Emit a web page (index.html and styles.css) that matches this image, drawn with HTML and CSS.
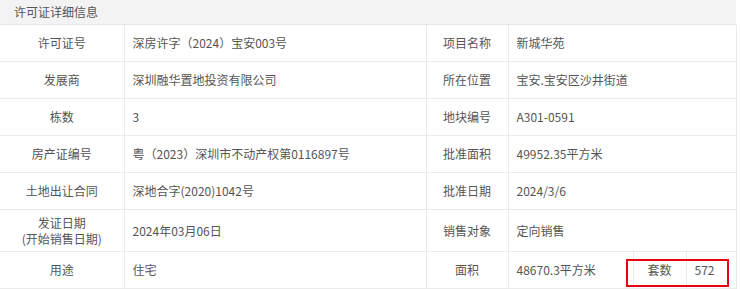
FILE: index.html
```html
<!DOCTYPE html>
<html lang="zh">
<head>
<meta charset="utf-8">
<link rel="stylesheet" href="styles.css">
</head>
<body>
<div class="panel">
  <div class="panel-title">许可证详细信息</div>
  <table class="info">
    <colgroup>
      <col class="c1"><col class="c2"><col class="c3"><col class="c4"><col class="c5"><col class="c6">
    </colgroup>
    <tr><td class="lbl">许可证号</td><td class="val">深房许字（2024）宝安003号</td><td class="lbl">项目名称</td><td class="val" colspan="3">新城华苑</td></tr>
    <tr><td class="lbl">发展商</td><td class="val">深圳融华置地投资有限公司</td><td class="lbl">所在位置</td><td class="val" colspan="3">宝安.宝安区沙井街道</td></tr>
    <tr><td class="lbl">栋数</td><td class="val">3</td><td class="lbl">地块编号</td><td class="val" colspan="3">A301-0591</td></tr>
    <tr><td class="lbl">房产证编号</td><td class="val">粤（2023）深圳市不动产权第0116897号</td><td class="lbl">批准面积</td><td class="val" colspan="3">49952.35平方米</td></tr>
    <tr><td class="lbl">土地出让合同</td><td class="val">深地合字(2020)1042号</td><td class="lbl">批准日期</td><td class="val" colspan="3">2024/3/6</td></tr>
    <tr class="tall"><td class="lbl">发证日期<br>(开始销售日期)</td><td class="val">2024年03月06日</td><td class="lbl">销售对象</td><td class="val" colspan="3">定向销售</td></tr>
    <tr><td class="lbl">用途</td><td class="val">住宅</td><td class="lbl">面积</td><td class="val">48670.3平方米</td><td class="lbl">套数</td><td class="val">572</td></tr>
  </table>
  <div class="highlight"></div>
</div>
</body>
</html>
```
FILE: styles.css
```css
html, body {
  margin: 0;
  padding: 0;
  background: #fff;
}
body {
  font-family: "Noto Sans CJK SC", "Noto Sans", sans-serif;
  font-size: 12px;
  color: #555;
}
.panel {
  position: relative;
  width: 736px;
}
.panel-title {
  height: 25px;
  line-height: 24px;
  padding-left: 14px;
  background: #f3f3f3;
  border-bottom: 1px solid #e6e6e6;
  box-sizing: border-box;
  color: #555;
}
.info {
  width: 736px;
  border-collapse: collapse;
  table-layout: fixed;
}
.c1 { width: 124px; }
.c2 { width: 302px; }
.c3 { width: 82px; }
.c4 { width: 125px; }
.c5 { width: 53px; }
.c6 { width: 50px; }
.info td {
  border: 1px solid #ebebeb;
  height: 36px;
  padding: 0;
  vertical-align: middle;
  line-height: 16px;
}
.info tr:first-child td { border-top: none; }
.info td:first-child { border-left: none; }
.info tr.tall td { height: 41px; }
.lbl {
  text-align: center;
}
.val {
  text-align: left;
  padding-left: 8px !important;
}
.highlight {
  position: absolute;
  left: 626px;
  top: 259px;
  width: 103px;
  height: 28px;
  border: 2px solid #e60012;
  box-sizing: border-box;
}
```
